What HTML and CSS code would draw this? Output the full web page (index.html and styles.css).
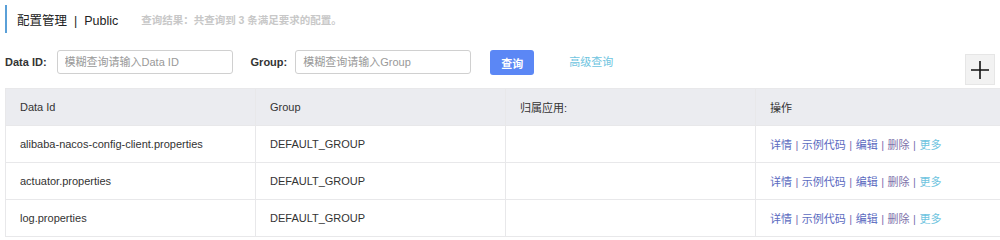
FILE: index.html
```html
<!DOCTYPE html>
<html lang="zh-CN">
<head>
    <meta charset="UTF-8">
    <title>配置管理</title>
    <link rel="stylesheet" href="styles.css">
</head>
<body>
    <div class="page-header">
        <span class="title">配置管理 &nbsp;|&nbsp; Public</span>
        <span class="summary">查询结果：共查询到 3 条满足要求的配置。</span>
    </div>

    <div class="toolbar">
        <label class="field-label">Data ID:</label>
        <input class="field-input" type="text" placeholder="模糊查询请输入Data ID">
        <label class="field-label group-label">Group:</label>
        <input class="field-input" type="text" placeholder="模糊查询请输入Group">
        <button class="btn-primary">查询</button>
        <a class="link-advanced" href="#">高级查询</a>
        <button class="btn-add">
            <svg width="18" height="18" viewBox="0 0 18 18"><path d="M9 0V18M0 9H18" stroke="#111" stroke-width="1.6"/></svg>
        </button>
    </div>

    <table class="config-table">
        <tr>
            <th>Data Id</th>
            <th>Group</th>
            <th>归属应用:</th>
            <th>操作</th>
        </tr>
        <tr>
            <td>alibaba-nacos-config-client.properties</td>
            <td>DEFAULT_GROUP</td>
            <td></td>
            <td class="ops"><a href="#">详情</a><span class="sep">|</span><a href="#">示例代码</a><span class="sep">|</span><a href="#">编辑</a><span class="sep">|</span><a href="#" class="del">删除</a><span class="sep">|</span><a href="#" class="more">更多</a></td>
        </tr>
        <tr>
            <td>actuator.properties</td>
            <td>DEFAULT_GROUP</td>
            <td></td>
            <td class="ops"><a href="#">详情</a><span class="sep">|</span><a href="#">示例代码</a><span class="sep">|</span><a href="#">编辑</a><span class="sep">|</span><a href="#" class="del">删除</a><span class="sep">|</span><a href="#" class="more">更多</a></td>
        </tr>
        <tr>
            <td>log.properties</td>
            <td>DEFAULT_GROUP</td>
            <td></td>
            <td class="ops"><a href="#">详情</a><span class="sep">|</span><a href="#">示例代码</a><span class="sep">|</span><a href="#">编辑</a><span class="sep">|</span><a href="#" class="del">删除</a><span class="sep">|</span><a href="#" class="more">更多</a></td>
        </tr>
    </table>
</body>
</html>
```

FILE: styles.css
```css
body {
    margin: 0;
    padding: 5px 0 0 5px;
    font-family: "Liberation Sans", Arial, "Noto Sans CJK SC", sans-serif;
    font-size: 11px;
    color: #333;
    background: #fff;
}
.page-header {
    display: flex;
    align-items: center;
    height: 28px;
    border-left: 2px solid #5aa0d8;
    padding-left: 10px;
}
.title {
    font-size: 12.5px;
    color: #222;
}
.summary {
    margin-left: 23px;
    font-size: 10.5px;
    font-weight: bold;
    color: #c8c8c8;
}
.toolbar {
    display: flex;
    align-items: flex-start;
    margin-top: 17px;
    height: 35px;
}
.field-label {
    font-weight: bold;
    color: #333;
    line-height: 25px;
    margin-right: 10px;
}
.group-label {
    margin-left: 18px;
    margin-right: 8px;
}
.field-input {
    width: 176px;
    height: 24px;
    box-sizing: border-box;
    border: 1px solid #d0d0d0;
    border-radius: 3px;
    padding: 0 7px;
    font-family: inherit;
    font-size: 11px;
    outline: none;
}
.field-input::placeholder {
    color: #999;
}
.btn-primary {
    margin-left: 19px;
    width: 44px;
    height: 25px;
    border: none;
    border-radius: 3px;
    background: #5b87f5;
    color: #fff;
    font-family: inherit;
    font-size: 11px;
    font-weight: bold;
}
.link-advanced {
    margin-left: 35px;
    line-height: 25px;
    color: #6ec4e0;
    text-decoration: none;
    font-size: 11px;
}
.btn-add {
    margin-left: auto;
    margin-right: 5px;
    margin-top: 4px;
    width: 30px;
    height: 31px;
    border: 1px solid #e6e6e6;
    background: #f2f2f2;
    display: flex;
    align-items: center;
    justify-content: center;
    padding: 0;
}
.config-table {
    margin-top: 3px;
    width: 995px;
    border-collapse: collapse;
    table-layout: fixed;
}
th, td {
    height: 37px;
    box-sizing: border-box;
    padding: 0 14px;
    text-align: left;
    font-size: 11px;
    border: 1px solid #e8e8ea;
    white-space: nowrap;
}
th {
    background: #ebecf0;
    font-weight: normal;
    color: #333;
}
th:nth-child(1), th:nth-child(2), th:nth-child(3) {
    width: 250px;
}
.config-table tr > :last-child {
    border-right: none;
}
.ops a {
    color: #5b6bbf;
    text-decoration: none;
}
.ops a.del {
    color: #7d72aa;
}
.ops a.more {
    color: #6ec4e0;
}
.sep {
    color: #7a6fb0;
    margin: 0 3.5px;
}
```
